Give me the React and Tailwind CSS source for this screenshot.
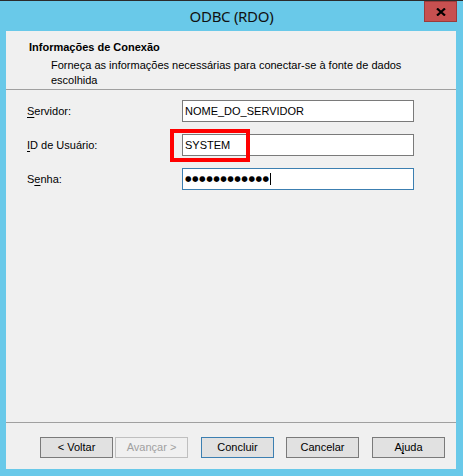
import React from 'react'

const Label = ({ children }) => (
  <div className="w-[176px] pl-[21px] text-[11px] text-black">{children}</div>
)

const Field = ({ children, focused }) => (
  <div
    className={`flex h-[22px] w-[232px] items-center border bg-white px-[2px] text-[11px] text-black ${
      focused ? 'border-[#3c7fb1]' : 'border-[#7a7a7a]'
    }`}
  >
    {children}
  </div>
)

const Btn = ({ children, disabled, primary }) => (
  <div
    className={`flex h-[21px] w-[73px] items-center justify-center border text-[11px] ${
      disabled
        ? 'border-[#bfbfbf] bg-[#f0f0f0] text-[#a0a0a0]'
        : primary
        ? 'border-[#3c7fb1] bg-[#e1e1e1] text-black'
        : 'border-[#7a7a7a] bg-[#e1e1e1] text-black'
    }`}
  >
    {children}
  </div>
)

export default function App() {
  return (
    <div
      className="flex h-[476px] w-[463px] flex-col border-t border-[#2b2b2b] bg-[#69c9e9]"
      style={{ fontFamily: '"Liberation Sans", Arial, sans-serif' }}
    >
      {/* Title bar */}
      <div className="grid h-[30px] grid-cols-[1fr_auto_1fr] items-start">
        <div />
        <div
          className="pt-[6px] text-[15px] leading-[18px] tracking-[-0.3px] text-[#111]"
          style={{ fontFamily: '"Noto Sans", "Open Sans", sans-serif' }}
        >
          ODBC (RDO)
        </div>
        <div className="flex justify-end pr-[6px]">
          <div className="flex h-[21px] w-[33px] items-center justify-center border border-[#9b3b3b] bg-[#c75050]">
            <svg width="10" height="8" viewBox="0 0 10 8">
              <path d="M1 0.5 L9 7.5 M9 0.5 L1 7.5" stroke="#000" strokeWidth="2.2" />
            </svg>
          </div>
        </div>
      </div>

      {/* Client area */}
      <div className="ml-[6px] flex h-[438px] w-[450px] flex-col bg-[#f0f0f0]">
        <div className="h-[59px] border-b border-[#a0a0a0] pt-[10px]">
          <div className="pl-[23px] text-[11px] font-bold leading-[13px] text-black">
            Informações de Conexão
          </div>
          <div className="mt-[4px] pl-[45px] pr-[40px] text-[11px] leading-[15px] text-black">
            Forneça as informações necessárias para conectar-se à fonte de dados escolhida
          </div>
        </div>

        <div className="flex flex-1 flex-col gap-[12px] pt-[10px]">
          <div className="flex items-center">
            <Label>
              <u className="underline-offset-[2px]">S</u>ervidor:
            </Label>
            <Field>NOME_DO_SERVIDOR</Field>
          </div>
          <div className="flex items-center">
            <Label>
              <u className="underline-offset-[2px]">I</u>D de Usuário:
            </Label>
            <div className="relative">
              <Field>SYSTEM</Field>
              <div className="absolute left-[-12px] top-[-5px] h-[33px] w-[80px] border-[4px] border-[#ff0000]" />
            </div>
          </div>
          <div className="flex items-center">
            <Label>
              S<u className="underline-offset-[2px]">e</u>nha:
            </Label>
            <Field focused>
              <span
                className="text-[7.5px] leading-none tracking-[0.5px]"
                style={{ fontFamily: '"DejaVu Sans", sans-serif' }}
              >
                ●●●●●●●●●●●●
              </span>
              <span className="h-[12px] w-px bg-black" />
            </Field>
          </div>
        </div>

        <div className="flex h-[47px] items-start justify-end border-t border-[#a0a0a0] pr-[11px] pt-[14px]">
          <Btn>&lt; Voltar</Btn>
          <div className="ml-[2px]">
            <Btn disabled>Avançar &gt;</Btn>
          </div>
          <div className="ml-[13px]">
            <Btn primary>Concluir</Btn>
          </div>
          <div className="ml-[12px]">
            <Btn>Cancelar</Btn>
          </div>
          <div className="ml-[13px]">
            <Btn>
              A<u className="underline-offset-[2px]">j</u>uda
            </Btn>
          </div>
        </div>
      </div>
    </div>
  )
}
